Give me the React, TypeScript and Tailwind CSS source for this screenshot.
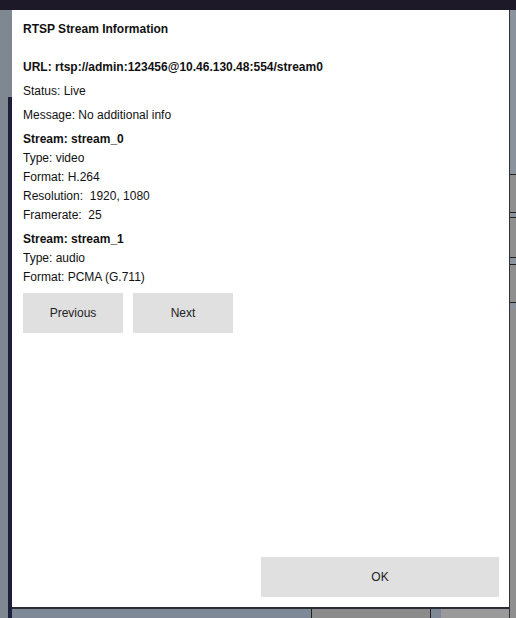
import React from "react";

const streams = [
  {
    name: "stream_0",
    rows: ["Type: video", "Format: H.264", "Resolution:  1920, 1080", "Framerate:  25"]
  },
  {
    name: "stream_1",
    rows: ["Type: audio", "Format: PCMA (G.711)"]
  }
];

const StreamInfoDialog = () => {
  return (
    <div className="absolute left-[12px] top-[10px] w-[497px] h-[598px] bg-white flex flex-col px-[11px] pt-[10px] pb-[10px] text-[12px] text-[#111] border-b border-[#2a2d33]">
      <h2 className="font-bold leading-[19px]">RTSP Stream Information</h2>
      <p className="font-bold leading-[19px] mt-[19px]">
        URL: rtsp://admin:123456@10.46.130.48:554/stream0
      </p>
      <p className="leading-[19px] mt-[5px] whitespace-pre">Status: Live</p>
      <p className="leading-[19px] mt-[5px] whitespace-pre">Message: No additional info</p>
      {streams.map((s) => (
        <div key={s.name} className="mt-[5px]">
          <p className="font-bold leading-[19px]">Stream: {s.name}</p>
          {s.rows.map((r) => (
            <p key={r} className="leading-[19px] whitespace-pre">
              {r}
            </p>
          ))}
        </div>
      ))}
      <div className="flex gap-[10px] mt-[6px]">
        <button className="w-[100px] h-[40px] bg-[#e0e0e0] text-[#222]">Previous</button>
        <button className="w-[100px] h-[40px] bg-[#e0e0e0] text-[#222]">Next</button>
      </div>
      <div className="mt-auto flex justify-end">
        <button className="w-[238px] h-[40px] bg-[#e0e0e0] text-[#222] mr-[-1px]">OK</button>
      </div>
    </div>
  );
};

export default function App() {
  return (
    <div
      className="relative w-[516px] h-[618px] overflow-hidden bg-[#7f8894] flex flex-col"
      style={{ fontFamily: '"Liberation Sans", Arial, sans-serif' }}
    >
      {/* app behind the modal */}
      <div className="h-[10px] bg-[#1e1929] shrink-0" />
      <div className="flex flex-1">
        <div className="w-[8px] bg-[#7f8791]" />
        <div className="w-[4px] flex flex-col">
          <div className="h-[87px] bg-[#7f8791]" />
          <div className="flex-1 bg-[#1b1f3c]" />
        </div>
        <div className="flex-1 flex flex-col">
          <div className="flex-1" />
          <div className="h-[10px] flex border-t border-[#2a2d33]">
            <div className="w-[299px] bg-[#7e8897]" />
            <div className="w-[120px] bg-[#8b8b8b] border-x border-[#222]" />
            <div className="w-[10px] bg-[#7e8897]" />
            <div className="flex-1 bg-[#9a9a9a]" />
          </div>
        </div>
        <div className="w-[7px] flex flex-col border-l border-[#333]">
          <div className="h-[164px] bg-[#8a929e]" />
          <div className="h-[39px] bg-[#8f8f8f] border-y border-[#222]" />
          <div className="h-[4px] bg-[#8a929e]" />
          <div className="h-[41px] bg-[#8f8f8f] border-y border-[#222]" />
          <div className="h-[6px] bg-[#8a929e]" />
          <div className="h-[39px] bg-[#8f8f8f] border-y border-[#222]" />
          <div className="h-[6px] bg-[#8a929e]" />
          <div className="flex-1 bg-[#8f8f8f]" />
        </div>
      </div>
      <StreamInfoDialog />
    </div>
  );
}
